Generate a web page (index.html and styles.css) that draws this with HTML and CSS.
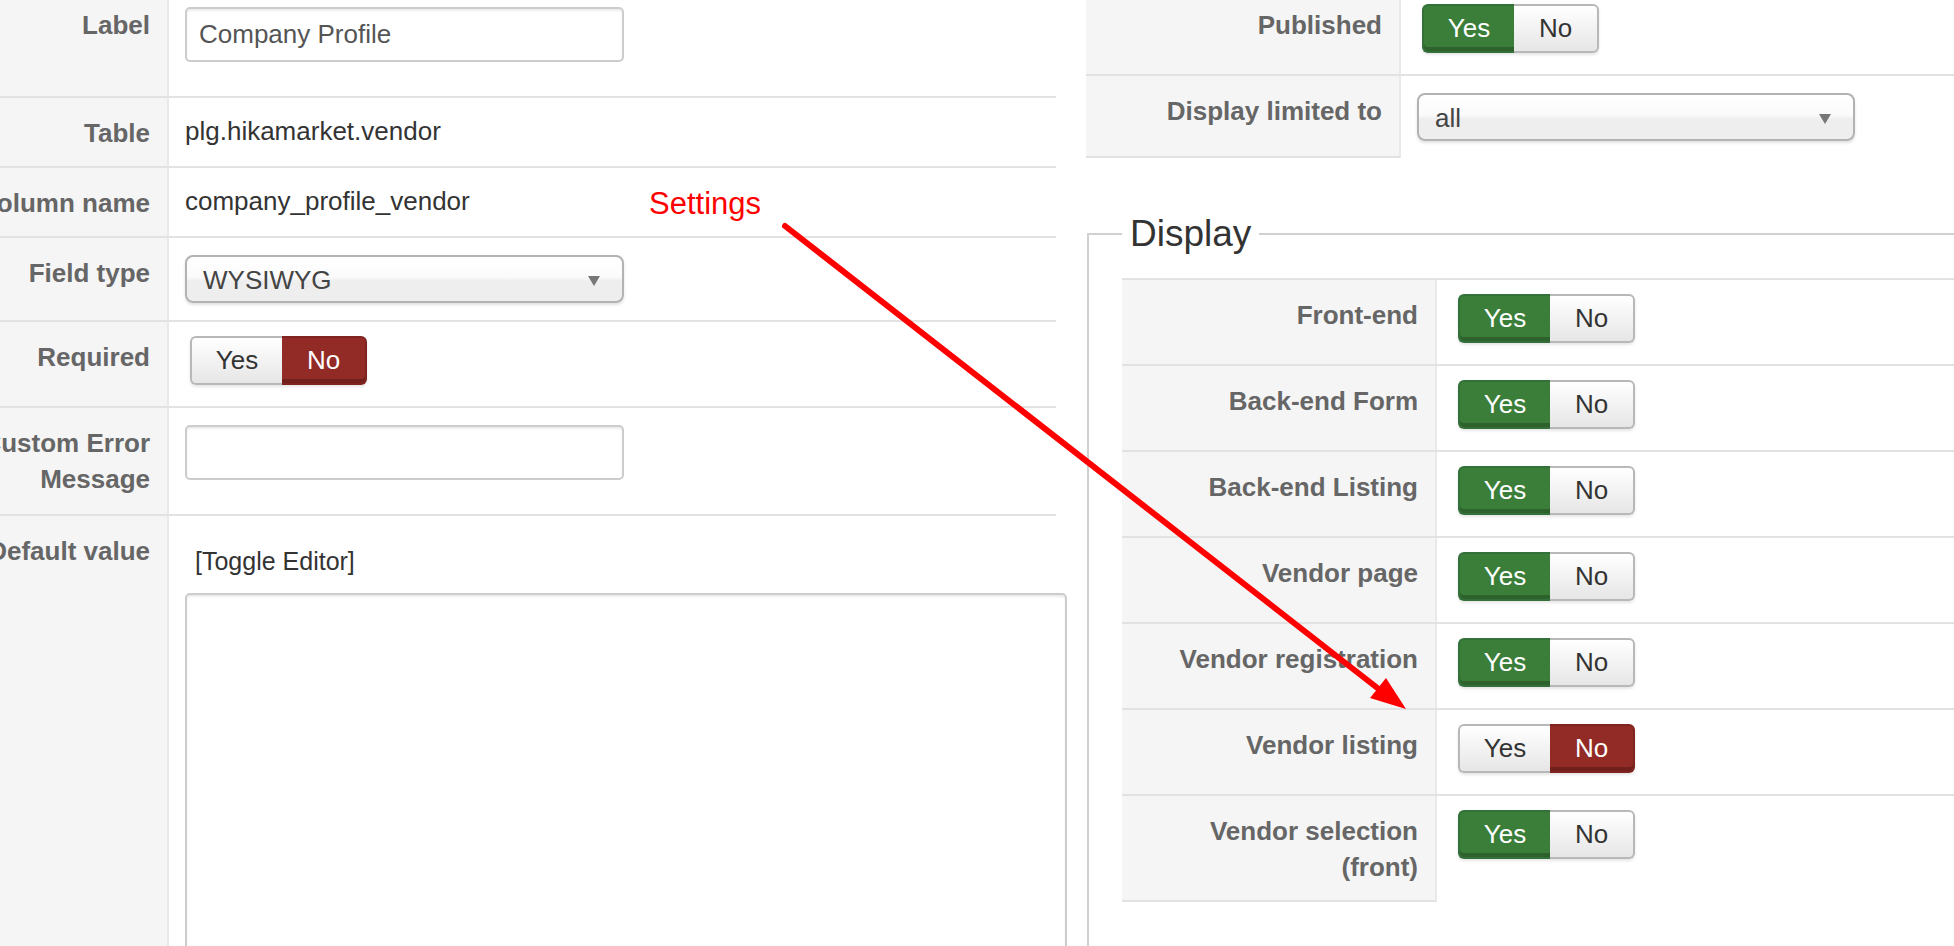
FILE: index.html
```html
<!DOCTYPE html>
<html lang="en">
<head>
    <meta charset="UTF-8">
    <meta name="viewport" content="width=device-width, initial-scale=1.0">
    <title>Field - company_profile_vendor</title>
    <link rel="stylesheet" href="styles.css">
</head>
<body>
    <div class="panel panel-main">
        <div class="row row-first">
            <div class="key"><label>Label</label></div>
            <div class="val"><input class="text-input" type="text" value="Company Profile"></div>
        </div>
        <div class="row">
            <div class="key"><label>Table</label></div>
            <div class="val"><div class="val-text">plg.hikamarket.vendor</div></div>
        </div>
        <div class="row">
            <div class="key"><label>Column name</label></div>
            <div class="val"><div class="val-text">company_profile_vendor</div></div>
        </div>
        <div class="row">
            <div class="key"><label>Field type</label></div>
            <div class="val">
                <div class="select"><span>WYSIWYG</span></div>
            </div>
        </div>
        <div class="row">
            <div class="key"><label>Required</label></div>
            <div class="val">
                <div class="toggle">
                    <span class="yes">Yes</span><span class="no active-no">No</span>
                </div>
            </div>
        </div>
        <div class="row row-double">
            <div class="key"><label>Custom Error<br>Message</label></div>
            <div class="val"><input class="text-input" type="text" value=""></div>
        </div>
        <div class="row">
            <div class="key"><label>Default value</label></div>
            <div class="val">
                <div class="toggle-editor">[Toggle Editor]</div>
                <textarea class="editor"></textarea>
            </div>
        </div>
    </div>

    <div class="panel panel-side">
        <div class="group">
            <div class="row">
                <div class="key"><label>Published</label></div>
                <div class="val">
                    <div class="toggle">
                        <span class="yes active-yes">Yes</span><span class="no">No</span>
                    </div>
                </div>
            </div>
            <div class="row">
                <div class="key"><label>Display limited to</label></div>
                <div class="val">
                    <div class="select"><span>all</span></div>
                </div>
            </div>
        </div>

        <fieldset class="display-set">
            <legend>Display</legend>
            <div class="group">
                <div class="row">
                    <div class="key"><label>Front-end</label></div>
                    <div class="val"><div class="toggle"><span class="yes active-yes">Yes</span><span class="no">No</span></div></div>
                </div>
                <div class="row">
                    <div class="key"><label>Back-end Form</label></div>
                    <div class="val"><div class="toggle"><span class="yes active-yes">Yes</span><span class="no">No</span></div></div>
                </div>
                <div class="row">
                    <div class="key"><label>Back-end Listing</label></div>
                    <div class="val"><div class="toggle"><span class="yes active-yes">Yes</span><span class="no">No</span></div></div>
                </div>
                <div class="row">
                    <div class="key"><label>Vendor page</label></div>
                    <div class="val"><div class="toggle"><span class="yes active-yes">Yes</span><span class="no">No</span></div></div>
                </div>
                <div class="row">
                    <div class="key"><label>Vendor registration</label></div>
                    <div class="val"><div class="toggle"><span class="yes active-yes">Yes</span><span class="no">No</span></div></div>
                </div>
                <div class="row">
                    <div class="key"><label>Vendor listing</label></div>
                    <div class="val"><div class="toggle"><span class="yes">Yes</span><span class="no active-no">No</span></div></div>
                </div>
                <div class="row">
                    <div class="key"><label>Vendor selection<br>(front)</label></div>
                    <div class="val"><div class="toggle"><span class="yes active-yes">Yes</span><span class="no">No</span></div></div>
                </div>
            </div>
        </fieldset>
    </div>

    <!-- annotation drawn on top of the screenshot -->
    <svg class="notes" width="1954" height="946" viewBox="0 0 1954 946">
        <text x="649" y="214" class="notes-text">Settings</text>
        <line x1="785" y1="226" x2="1380" y2="690" stroke="#ff0000" stroke-width="6" stroke-linecap="round"/>
        <polygon points="1406,709 1370,698 1386,678" fill="#ff0000"/>
    </svg>
</body>
</html>
```

FILE: styles.css
```css
body {
    font-family: 'Liberation Sans', Arial, Helvetica, sans-serif;
    margin: 0;
    padding: 0;
    width: 1954px;
    height: 946px;
    overflow: hidden;
    position: relative;
    background-color: #fff;
    color: #333;
    display: flex;
    align-items: flex-start;
}

.panel {
    flex: none;
    margin-top: -12px;
}

.panel-main {
    width: 1056px;
}

.panel-side {
    width: 900px;
    margin-left: 30px;
}

.row {
    display: grid;
    grid-template-columns: 169px 1fr;
    border-top: 2px solid #e2e2e2;
    box-sizing: border-box;
}

.panel-side .row {
    grid-template-columns: 315px 1fr;
}

.row-first {
    min-height: 108px;
}

.row-double {
    min-height: 108px;
}

.key {
    background-color: #f5f5f5;
    border-right: 2px solid #e9e9e9;
    padding: 17px 17px 15px 0;
    display: flex;
    flex-direction: column;
    align-items: flex-end;
}

.key label {
    font-size: 26px;
    line-height: 36px;
    font-weight: bold;
    color: #666;
    white-space: nowrap;
    text-align: right;
}

.group .row:last-child .key {
    border-bottom: 2px solid #e2e2e2;
}

.val {
    padding: 17px 0 17px 16px;
    min-width: 0;
}

.val-text {
    font-size: 26px;
    line-height: 36px;
    margin-top: -2px;
    color: #333;
}

.text-input {
    display: block;
    width: 439px;
    height: 55px;
    box-sizing: border-box;
    border: 2px solid #ccc;
    border-radius: 5px;
    box-shadow: inset 0 2px 2px rgba(0, 0, 0, 0.075);
    padding: 0 12px;
    margin: 0;
    font-family: inherit;
    font-size: 26px;
    color: #555;
    background-color: #fff;
    outline: none;
}

.select {
    width: 439px;
    height: 48px;
    box-sizing: border-box;
    border: 2px solid #b3b3b3;
    border-radius: 8px;
    background: linear-gradient(to bottom, #ffffff 0%, #fbfbfb 45%, #eeeeee 55%, #eeeeee 100%);
    box-shadow: 0 2px 3px rgba(0, 0, 0, 0.12);
    display: flex;
    align-items: center;
    padding: 2px 16px 0;
    font-size: 26px;
    color: #444;
    position: relative;
}

.panel-side .select {
    width: 438px;
}

.select::after {
    content: '';
    position: absolute;
    right: 22px;
    top: 19px;
    border-left: 6px solid transparent;
    border-right: 6px solid transparent;
    border-top: 10px solid #777;
}

.toggle {
    display: inline-flex;
    height: 49px;
    margin: -3px 0 4px 5px;
    border-radius: 6px;
    box-shadow: 0 2px 3px rgba(0, 0, 0, 0.1);
    vertical-align: top;
}

.toggle span {
    display: flex;
    align-items: center;
    justify-content: center;
    font-size: 26px;
    color: #333;
    background: linear-gradient(to bottom, #ffffff, #e6e6e6);
    border: 2px solid #b8b8b8;
    box-sizing: border-box;
}

.toggle .yes {
    width: 92px;
    border-right: none;
    border-radius: 6px 0 0 6px;
}

.toggle .no {
    width: 85px;
    border-left: none;
    border-radius: 0 6px 6px 0;
}

.toggle .active-yes {
    background: #3a7e3a;
    border-color: #33703a;
    color: #fff;
    box-shadow: inset 0 -4px 0 rgba(0, 0, 0, 0.22);
}

.toggle .active-no {
    background: #922a25;
    border-color: #7f2420;
    color: #fff;
    box-shadow: inset 0 -4px 0 rgba(0, 0, 0, 0.22);
}

.toggle-editor {
    font-size: 25px;
    line-height: 36px;
    margin: 10px 0 14px 10px;
    color: #333;
}

.editor {
    display: block;
    width: 882px;
    height: 420px;
    margin: 0;
    box-sizing: border-box;
    border: 2px solid #ccc;
    border-radius: 5px;
    box-shadow: inset 0 2px 2px rgba(0, 0, 0, 0.075);
    resize: none;
    background-color: #fff;
}

.display-set {
    margin: 54px 0 0 1px;
    padding: 22px 0 0 33px;
    border: 2px solid #d0d0d0;
    min-height: 800px;
    min-width: 0;
}

.display-set legend {
    font-size: 37px;
    line-height: 44px;
    padding: 0 8px;
    color: #333;
    font-weight: normal;
}

.notes {
    position: absolute;
    top: 0;
    left: 0;
    pointer-events: none;
}

.notes-text {
    font-family: 'Liberation Sans', Arial, sans-serif;
    font-size: 31px;
    fill: #ff0000;
}
```
